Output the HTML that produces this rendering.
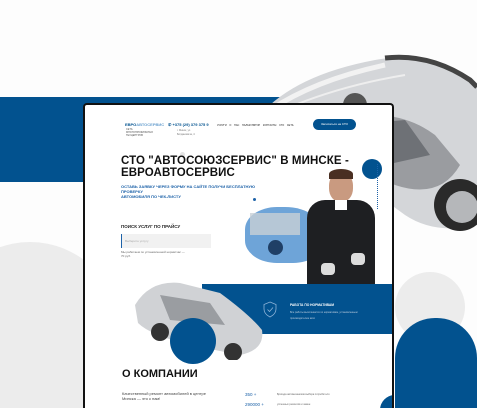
<!DOCTYPE html>
<html><head><meta charset="utf-8"><style>
*{margin:0;padding:0;box-sizing:border-box}
html,body{width:477px;height:408px;overflow:hidden}
body{background:#fdfdfd;position:relative;font-family:"Liberation Sans",sans-serif}
.a{position:absolute}
</style></head><body>
<div class="a" style="left:0;top:97px;width:300px;height:85px;background:#02528f"></div>
<div class="a" style="left:-60px;top:242px;width:180px;height:166px;border-radius:90px 90px 0 0;background:#ececec"></div>
<div class="a" style="left:395px;top:272px;width:70px;height:70px;border-radius:50%;background:#ececec"></div>
<div class="a" style="left:395px;top:318px;width:82px;height:90px;border-radius:40px 40px 0 0;background:#02528f"></div>
<svg class="a" style="left:255px;top:25px" width="222" height="215" viewBox="0 0 222 215">
<path d="M5 90 Q40 50 120 35 Q160 28 190 40 L222 60 L222 200 Q180 210 150 190 Q110 160 70 140 Q25 120 5 90Z" fill="#d4d6d9"/>
<path d="M15 85 Q60 55 130 40" stroke="#f2f2f2" stroke-width="5" fill="none"/>
<path d="M40 80 Q90 60 150 50" stroke="#eee" stroke-width="2" fill="none"/>
<path d="M130 33 Q175 28 215 55 L222 62" stroke="#444" stroke-width="5" fill="none"/>
<path d="M80 95 Q140 80 180 110 L205 140 Q185 175 140 160 Q100 140 80 95Z" fill="#9a9ca0"/>
<path d="M95 100 L150 95 L175 130 L130 140Z" fill="#6e7176"/>
<circle cx="205" cy="180" r="26" fill="#2a2a2a"/><circle cx="207" cy="182" r="16" fill="#b5b7ba"/>
<circle cx="100" cy="80" r="12" fill="#555"/>
</svg>
<div class="a" style="left:83px;top:103px;width:311px;height:305px;border:2px solid #111;border-bottom:none;border-radius:4px 4px 0 0;background:#fff;overflow:hidden">
 <div class="a" style="left:40px;top:17px;font-size:4px;color:#02528f;font-weight:bold">ЕВРО<span style="color:#6aa0cf">АВТОСЕРВИС</span></div>
 <div class="a" style="left:41px;top:23px;font-size:2.5px;color:#555;width:30px;line-height:3px">СЕТЬ МНОГОПРОФИЛЬНЫХ ТЕХЦЕНТРОВ</div>
 <div class="a" style="left:83px;top:17px;font-size:4px;color:#02528f;font-weight:bold">✆ +375 (29) 379 375 9</div>
 <div class="a" style="left:92px;top:24px;font-size:2.5px;color:#777;line-height:3.5px">г. Минск, ул.<br>Богдановича, 4</div>
 <div class="a" style="left:132px;top:19px;font-size:2.5px;color:#222;word-spacing:2px">УСЛУГИ О НАС НАЛЬКУЛЯТОР КОНТАКТЫ СТО СЕТЬ</div>
 <div class="a" style="left:228px;top:14px;width:43px;height:11px;border-radius:6px;background:#02528f;color:#fff;font-size:3px;text-align:center;line-height:11px">Записаться на СТО</div>
 <div class="a" style="left:95px;top:47px;width:5px;height:5px;border-radius:50%;background:#e4e4e4"></div>
 <div class="a" style="left:36px;top:50px;font-size:11.5px;font-weight:bold;color:#111;line-height:12px;letter-spacing:0.1px">СТО "АВТОСОЮЗСЕРВИС" В МИНСКЕ -<br>ЕВРОАВТОСЕРВИС</div>
 <div class="a" style="left:36px;top:79px;font-size:4px;font-weight:bold;color:#1d62a8;line-height:5px">ОСТАВЬ ЗАЯВКУ ЧЕРЕЗ ФОРМУ НА САЙТЕ ПОЛУЧИ БЕСПЛАТНУЮ<br>ПРОВЕРКУ<br>АВТОМОБИЛЯ ПО ЧЕК-ЛИСТУ</div>
 <div class="a" style="left:168px;top:93px;width:3px;height:3px;border-radius:50%;background:#1d62a8"></div>
 <div class="a" style="left:36px;top:119px;font-size:4.5px;font-weight:bold;color:#222">ПОИСК УСЛУГ ПО ПРАЙСУ</div>
 <div class="a" style="left:36px;top:129px;width:90px;height:14px;background:#f1f1f1;border-left:1px solid #1d62a8;font-size:3px;color:#aaa;padding:5px 3px">Выберите услугу</div>
 <div class="a" style="left:36px;top:145px;font-size:3px;color:#666;line-height:4px">Мы работаем по установленной норме/час —<br>70 руб.</div>
 <div class="a" style="left:277px;top:54px;width:20px;height:20px;border-radius:50%;background:#02528f"></div>
 <div class="a" style="left:292px;top:59px;width:3px;height:45px;border-left:1px dotted #1d62a8"></div>
 <div class="a" style="left:160px;top:102px;width:80px;height:56px;border-radius:40% 50% 40% 40%;background:#6ea4d8"></div>
 <div class="a" style="left:165px;top:108px;width:50px;height:22px;background:#c8cfd6;opacity:.8"></div>
 <div class="a" style="left:183px;top:135px;width:15px;height:15px;border-radius:50%;background:#1f3f66"></div>
 <div class="a" style="left:244px;top:67px;width:24px;height:30px;border-radius:45%;background:#c99a80"></div>
 <div class="a" style="left:244px;top:64px;width:24px;height:10px;border-radius:50% 50% 0 0;background:#4a2f22"></div>
 <div class="a" style="left:222px;top:95px;width:68px;height:90px;border-radius:18px 18px 0 0;background:#1e1f22"></div>
 <div class="a" style="left:250px;top:95px;width:12px;height:10px;background:#fff"></div>
 <div class="a" style="left:236px;top:158px;width:14px;height:12px;border-radius:4px;background:#dcdcdc"></div>
 <div class="a" style="left:266px;top:148px;width:14px;height:12px;border-radius:4px;background:#dcdcdc"></div>
 <div class="a" style="left:117px;top:179px;width:192px;height:50px;background:#02528f"></div>
 <svg class="a" style="left:178px;top:196px" width="14" height="17" viewBox="0 0 14 17"><path d="M7 1 L13 3.5 V8 Q13 13 7 16 Q1 13 1 8 V3.5Z" fill="none" stroke="#8fb4d8" stroke-width=".8"/><path d="M4.5 8.5 L6.5 10.5 L10 6.5" fill="none" stroke="#8fb4d8" stroke-width=".8"/></svg>
 <div class="a" style="left:205px;top:198px;font-size:3.3px;font-weight:bold;color:#fff">РАБОТА ПО НОРМАТИВАМ</div>
 <div class="a" style="left:205px;top:205px;font-size:2.5px;color:#bcd;line-height:6px">Все работы выполняются по нормативам, установленным<br>производителем авто</div>
 <svg class="a" style="left:45px;top:170px" width="140" height="85" viewBox="0 0 140 85">
 <path d="M5 30 Q20 5 50 8 L90 18 Q120 40 132 55 Q135 75 110 80 L60 70 Q20 60 8 48Z" fill="#d0d2d5"/>
 <path d="M30 20 L80 28 L95 50 L40 45Z" fill="#9a9da1"/>
 <circle cx="30" cy="57" r="9" fill="#333"/><circle cx="103" cy="77" r="9" fill="#333"/>
 </svg>
 <div class="a" style="left:85px;top:213px;width:46px;height:46px;border-radius:50%;background:#02528f"></div>
 <div class="a" style="left:37px;top:263px;font-size:11px;font-weight:bold;color:#111">О КОМПАНИИ</div>
 <div class="a" style="left:37px;top:286px;font-size:4px;color:#444;line-height:5px">Качественный ремонт автомобилей в центре<br>Минска — это к нам!</div>
 <div class="a" style="left:160px;top:287px;font-size:4.5px;color:#1d62a8">350 +</div>
 <div class="a" style="left:160px;top:297px;font-size:4.5px;color:#1d62a8">290000 +</div>
 <div class="a" style="left:192px;top:288px;font-size:2.5px;color:#666">Бригада автомехаников выбора потребителя</div>
 <div class="a" style="left:192px;top:298px;font-size:2.5px;color:#666">успешных ремонтов и замен</div>
 <div class="a" style="left:295px;top:290px;width:30px;height:30px;border-radius:50%;background:#02528f"></div>
</div>
</body></html>
